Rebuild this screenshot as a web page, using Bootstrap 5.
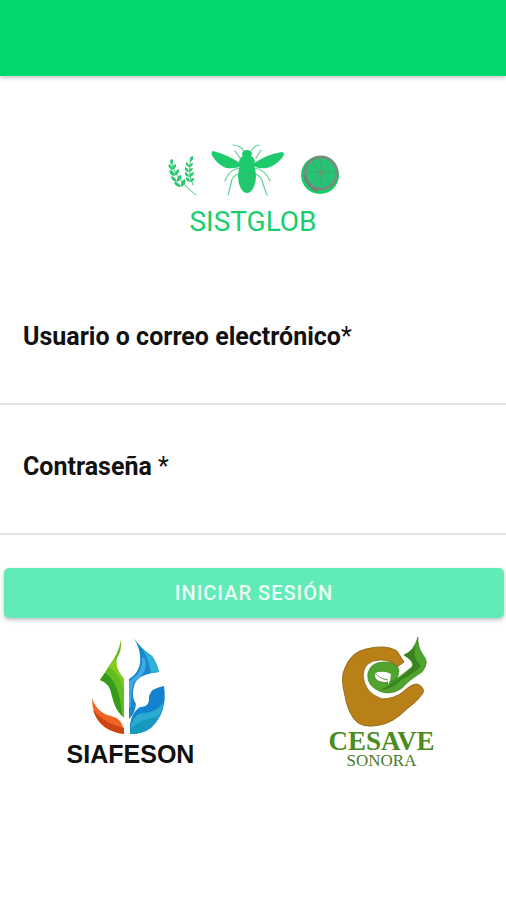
<!DOCTYPE html>
<html lang="es">
<head>
<meta charset="utf-8">
<meta name="viewport" content="width=device-width, initial-scale=1">
<title>SISTGLOB</title>
<link rel="stylesheet" href="https://cdn.jsdelivr.net/npm/bootstrap@5.3.0/dist/css/bootstrap.min.css">
<style>
body { font-family: Roboto, "Liberation Sans", sans-serif; color: #111; background: #fff; }
.top-bar { height: 76px; background: #03d66a; box-shadow: 0 1px 5px rgba(0,0,0,.3); }
.brand { padding-top: 66px; padding-bottom: 31px; }
.brand-name { font-size: 28px; line-height: 44px; color: #17cf6d; }
.field { padding-top: 46px; border-bottom: 2px solid #e2e2e2; }
.field label { font-size: 25px; line-height: 32px; font-weight: 700; padding-left: 23px; }
.field label span { font-weight: 400; }
.field input { height: 50px; font-size: 24px; padding: 0 23px; }
.login { margin: 33px 2px 0 4px; }
.btn-login { height: 50px; font-size: 20px; font-weight: 500; letter-spacing: 1px; color: #effff7; background: #61ebb7; border: 0; border-radius: 5px; box-shadow: 0 2px 4px rgba(0,0,0,.25); }
.btn-login:hover { color: #fff; background: #4fe0a9; }
.partners { padding-top: 15px; }
.siafeson { font: 700 25px/30px "Liberation Sans", Arial, sans-serif; }
.cesave { font: 700 27px/24px "Liberation Serif", serif; color: #4b8c1d; }
.sonora { font: 400 17px/16px "Liberation Serif", serif; color: #4d7a2c; }
</style>
</head>
<body>
<header class="top-bar"></header>
<main>
  <div class="brand d-flex flex-column align-items-center">
    <svg width="178" height="58" viewBox="164 142 178 58" aria-hidden="true">
      <g fill="none" stroke="#45ca80" stroke-linecap="round">
        <path d="M171 161Q175 180 196 195M191 157Q187 172 193 185" stroke-width="1"/>
      </g>
      <g fill="#27c96d">
        <path d="M171 165q-2-6 1-6 3 3-1 6M172 170q-5-3-3-6 4 2 3 6m0 0q0-5 4-6 1 4-4 6M174 176q-6-2-4-6 5 1 4 6m0 0q0-5 5-7 1 5-5 7M177 182q-6-1-6-6 5 1 6 6m0 0q-1-6 4-7 2 4-4 7M181 187q-6 0-7-5 5 0 7 5m0 0q-1-6 4-8 2 5-4 8"/>
        <path d="M190 162q-1-5 3-6 1 4-3 6M189 167q-4-1-3-5 3 1 3 5m0 0q1-4 4-4 0 4-4 4M188 172q-4-1-3-5 4 1 3 5m0 0q1-4 5-4-1 4-5 4M189 177q-5-1-4-5 4 1 4 5m0 0q0-4 5-5 0 4-5 5M190 182q-5-1-4-5 4 1 4 5m0 0q0-4 4-4 1 3-4 4"/>
      </g>
      <g fill="none" stroke="#5fd093" stroke-width="1.2" stroke-linecap="round">
        <path d="M244 151q-4-6-11-6M251 151q4-6 8-6M240 158l-5-7M256 158l5-8M240 168q-11 1-15 13M254 168q11 1 16 13M240 173q-9 3-9 11l-3 11M254 173q8 3 9 11l4 11"/>
      </g>
      <g fill="#1dcb6d">
        <path d="M242 164Q226 154 213 151Q210 152 213 157Q217 164 226 168Q235 169 242 166Z"/>
        <path d="M253 164Q267 154 282 152Q286 153 282 158Q275 166 267 168Q260 169 253 166Z"/>
        <ellipse cx="247" cy="154" rx="5" ry="4"/>
        <ellipse cx="247" cy="162" rx="8" ry="7"/>
        <ellipse cx="247" cy="176" rx="9" ry="17"/>
      </g>
      <path d="M240 173q7 2 14 0M240 178q7 2 15 0M241 183q7 2 13 0M243 188q4 1 9 0" fill="none" stroke="#48ac78" stroke-width=".8"/>
      <circle cx="320" cy="175" r="19" fill="#13ce6b"/>
      <circle cx="321" cy="173" r="16" fill="#24c675" stroke="#778d7c" stroke-width="3"/>
      <path d="M321 160v26M308 172h26M312 163l18 20M330 163l-18 20" stroke="#5a9673" stroke-width=".8"/>
      <circle cx="321" cy="173" r="2" fill="#729078"/>
      <path d="M304 175q3 13 14 16" fill="none" stroke="#737c75" stroke-width="2"/>
    </svg>
    <div class="brand-name">SISTGLOB</div>
  </div>
  <form>
    <div class="field">
      <label class="d-block" for="user">Usuario o correo electrónico<span>*</span></label>
      <input class="d-block w-100 border-0 bg-transparent" id="user" type="text" autocomplete="username">
    </div>
    <div class="field">
      <label class="d-block" for="password">Contraseña <span>*</span></label>
      <input class="d-block w-100 border-0 bg-transparent" id="password" type="password" autocomplete="current-password">
    </div>
    <div class="login d-grid">
      <button class="btn btn-login" type="submit">INICIAR SESIÓN</button>
    </div>
  </form>
  <div class="partners row g-0 text-center">
    <div class="col-6 d-flex flex-column align-items-center ps-2">
      <svg width="80" height="106" viewBox="90 634 80 106" aria-hidden="true">
        <path d="M120 641Q117 656 108 667L99 681Q109 684 111 697Q114 711 123 719V680Q113 669 116 659Q121 652 120 641Z" fill="#62bd23"/>
        <path d="M104 674Q119 683 121 717Q114 710 111 697Q109 684 99 681Z" fill="#359b18"/>
        <path d="M115 656Q110 664 108 668Q120 676 123 692V680Q113 669 115 656Z" fill="#84cb1b"/>
        <path d="M132 638Q140 650 151 657Q156 664 158 673Q136 675 133 687Q130 698 135 705Q134 715 128 720V680Q141 672 139 656Q138 647 132 638Z" fill="#1688cc"/>
        <path d="M136 643Q142 652 151 657Q156 664 158 673L150 674Q147 655 136 643Z" fill="#2eb0d8"/>
        <path d="M143 658Q149 673 133 683Q130 690 130 706L128 710V682Q142 674 141 659Z" fill="#43a9e3"/>
        <path d="M91 699Q96 714 110 717Q123 720 123 735Q91 731 91 699Z" fill="#f06522"/>
        <path d="M92 711Q104 725 123 729V735Q99 732 92 711Z" fill="#cd4511"/>
        <path d="M163 687Q167 713 150 729Q142 735 129 735V725Q131 713 139 708Q149 709 148 697Q150 689 163 687Z" fill="#1483cf"/>
        <path d="M130 726Q134 713 144 714Q156 713 163 703Q159 721 148 730Q140 735 129 735Z" fill="#2babd0"/>
        <path d="M129 730Q141 719 158 718Q149 735 129 735Z" fill="#1699bd"/>
      </svg>
      <div class="siafeson">SIAFESON</div>
    </div>
    <div class="col-6 d-flex flex-column align-items-center ps-1">
      <svg width="90" height="96" viewBox="337 634 90 96" aria-hidden="true">
        <path d="M397 668Q390 660 379 661Q364 662 363 676Q364 694 382 700Q394 700 403 693Q411 685 417 685Q425 688 423 694Q417 703 408 709Q393 724 380 726Q361 730 354 720Q347 710 345 697Q340 678 345 669Q351 653 366 650Q386 645 397 652L404 663Z" fill="#b98017" stroke="#94701c"/>
        <path d="M418 638Q417 647 423 656Q430 663 422 673Q409 681 402 689Q391 697 379 692Q366 686 368 674Q371 663 384 663Q396 663 399 671Q399 682 388 686L388 680Q383 682 375 674Q373 681 381 683Q390 685 399 678L412 668Q415 663 404 656Q414 652 418 638Z" fill="#50a32c" stroke="#3b821d" stroke-width=".7"/>
        <path d="M375 674Q384 671 391 675Q391 681 388 686V680Q381 680 375 674Z" fill="#fff"/>
        <path d="M418 642Q410 657 421 667Q414 675 402 680Q392 691 380 691Q398 683 412 668Q416 663 404 656Q414 652 418 642Z" fill="#38831f"/>
      </svg>
      <div class="cesave">CESAVE</div>
      <div class="sonora">SONORA</div>
    </div>
  </div>
</main>
<script src="https://cdn.jsdelivr.net/npm/bootstrap@5.3.0/dist/js/bootstrap.bundle.min.js"></script>
</body>
</html>
